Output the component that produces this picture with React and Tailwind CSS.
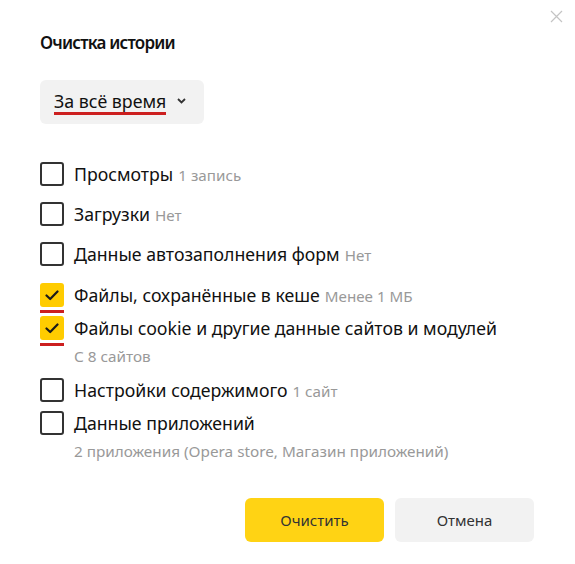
import { useState } from "react"

const ITEMS = [
  { id: 'views', label: 'Просмотры', note: '1 запись', checked: false, mt: 'mt-[38px]' },
  { id: 'downloads', label: 'Загрузки', note: 'Нет', checked: false, mt: 'mt-[15px]' },
  { id: 'autofill', label: 'Данные автозаполнения форм', note: 'Нет', checked: false, mt: 'mt-[15px]' },
  { id: 'cache', label: 'Файлы, сохранённые в кеше', note: 'Менее 1 МБ', checked: true, mt: 'mt-[16px]' },
  { id: 'cookies', label: 'Файлы cookie и другие данные сайтов и модулей', sub: 'С 8 сайтов', checked: true, mt: 'mt-[3px]' },
  { id: 'content', label: 'Настройки содержимого', note: '1 сайт', checked: false, mt: 'mt-[12px]' },
  { id: 'apps', label: 'Данные приложений', sub: '2 приложения (Opera store, Магазин приложений)', checked: false, mt: 'mt-[8px]' },
]

function Checkbox({ checked }) {
  if (checked) {
    return (
      <div className="flex flex-col shrink-0">
        <div className="w-6 h-6 rounded-[3px] bg-[#ffcc00] flex items-center justify-center">
          <svg width="14" height="11" viewBox="0 0 14 11" fill="none">
            <path d="M1.5 5.5 L5.2 9 L12.5 1.5" stroke="#1a1a1a" strokeWidth="2.2" strokeLinecap="round" strokeLinejoin="round" />
          </svg>
        </div>
        <div className="h-[3px] mt-[3px] bg-[#cc1f1f]" />
      </div>
    )
  }
  return <div className="w-6 h-6 shrink-0 rounded-[3px] border-2 border-[#333]" />
}

export default function App() {
  const [items] = useState(ITEMS)

  return (
    <div className="w-[575px] h-[564px] bg-white text-[#111] font-['Noto_Sans',sans-serif] relative">
      <button className="absolute top-[10px] right-[12px] text-[#c4c4c4]">
        <svg width="13" height="13" viewBox="0 0 13 13">
          <path d="M1 1 L12 12 M12 1 L1 12" stroke="currentColor" strokeWidth="1.2" />
        </svg>
      </button>

      <div className="pl-10 pt-[31px] pr-10">
        <h1 className="text-[17px] font-semibold leading-6 tracking-[-0.8px] text-[#111]">Очистка истории</h1>

        <div className="mt-[25px] w-[164px] h-[44px] rounded-md bg-[#f2f2f2] flex items-center pl-[14px]">
          <div className="flex flex-col">
            <span className="text-[17.8px] leading-6 text-[#111]">За всё время</span>
            <div className="h-[3px] -mt-[1px] bg-[#cc1f1f]" />
          </div>
          <svg className="ml-[11px] mt-[-2px]" width="9" height="6" viewBox="0 0 9 6">
            <path d="M1 1 L4.5 4.5 L8 1" stroke="#333" strokeWidth="1.8" fill="none" />
          </svg>
        </div>

        <div className="flex flex-col">
          {items.map(it => (
            <div key={it.id} className={`${it.mt} flex items-start gap-[10px]`}>
              <Checkbox checked={it.checked} />
              <div className="flex flex-col">
                <div className="text-[17.7px] leading-6 text-[#111] whitespace-nowrap">
                  {it.label}
                  {it.note && <span className="ml-[5px] text-[15.2px] text-[#999]">{it.note}</span>}
                </div>
                {it.sub && <div className="mt-[6px] text-[15.3px] leading-5 text-[#999] whitespace-nowrap">{it.sub}</div>}
              </div>
            </div>
          ))}
        </div>

        <div className="mt-[37px] flex justify-end gap-[11px] pr-[1px]">
          <button className="w-[139px] h-[44px] rounded-md bg-[#ffd314] text-[15px] text-[#333]">Очистить</button>
          <button className="w-[139px] h-[44px] rounded-md bg-[#f2f2f2] text-[15px] text-[#333]">Отмена</button>
        </div>
      </div>
    </div>
  )
}
